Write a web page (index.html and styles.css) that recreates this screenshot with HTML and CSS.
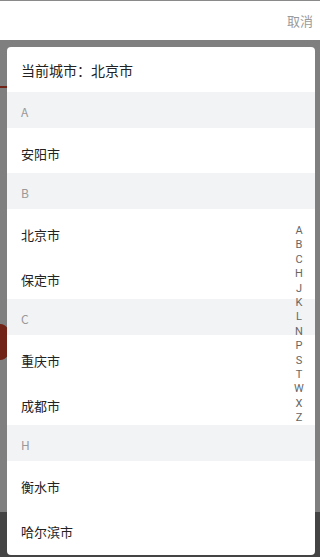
FILE: index.html
```html
<!DOCTYPE html>
<html lang="zh">
<head>
<meta charset="utf-8">
<link rel="stylesheet" href="styles.css">
</head>
<body>
<div class="page">
  <div class="topbar"><span class="cancel">取消</span></div>
  <div class="content">
    <div class="redline"></div>
    <div class="redknob"></div>
    <div class="tabbar"></div>
  </div>
</div>
<div class="overlay"></div>
<div class="modal">
  <div class="current">当前城市：北京市</div>
  <div class="list">
    <div class="group">A</div>
    <div class="city">安阳市</div>
    <div class="group">B</div>
    <div class="city">北京市</div>
    <div class="city">保定市</div>
    <div class="group">C</div>
    <div class="city">重庆市</div>
    <div class="city">成都市</div>
    <div class="group">H</div>
    <div class="city">衡水市</div>
    <div class="city">哈尔滨市</div>
  </div>
  <ul class="index">
    <li>A</li><li>B</li><li>C</li><li>H</li><li>J</li><li>K</li><li>L</li><li>N</li><li>P</li><li>S</li><li>T</li><li>W</li><li>X</li><li>Z</li>
  </ul>
</div>
</body>
</html>
```
FILE: styles.css
```css
* { box-sizing: border-box; }
html, body { margin: 0; padding: 0; }
body {
  width: 320px;
  height: 557px;
  overflow: hidden;
  font-family: "Noto Sans CJK SC", "Noto Sans", sans-serif;
  background: #fff;
  position: relative;
}
.page { display: flex; flex-direction: column; height: 557px; }
.topbar {
  height: 40px;
  border-top: 1px solid #8a8a8a;
  display: flex;
  align-items: center;
  justify-content: flex-end;
  padding-right: 7px;
  background: #fff;
}
.cancel { color: #9a9a9a; font-size: 13px; line-height: 1; }
.content { flex: 1; position: relative; background: #fff; }
.redline {
  position: absolute; left: 0; top: 46px; width: 8px; height: 2px; background: #e0462c;
}
.redknob {
  position: absolute; left: -12px; top: 284px; width: 24px; height: 36px;
  border-radius: 50%; background: #e0462c;
}
.tabbar {
  position: absolute; left: 0; right: 0; bottom: 0; height: 45px; background: #888;
}
.overlay {
  position: absolute; left: 0; right: 0; top: 40px; bottom: 0;
  background: rgba(0,0,0,0.5);
}
.modal {
  position: absolute;
  left: 7px; top: 47px; width: 308px; height: 508px;
  background: #fff;
  border-radius: 4px;
  overflow: hidden;
}
.current {
  height: 45px;
  padding-left: 14px;
  display: flex; align-items: center;
  font-size: 14px; color: #222;
}
.group {
  height: 36px;
  background: #f2f3f5;
  padding-left: 14px;
  padding-top: 2px;
  display: flex; align-items: center;
  font-size: 12px; color: #999;
}
.city {
  height: 45px;
  padding-left: 14px;
  padding-top: 6px;
  display: flex; align-items: center;
  font-size: 13px; color: #222;
}
.index {
  position: absolute;
  right: 10px; top: 177px;
  margin: 0; padding: 0; list-style: none;
  width: 12px;
  text-align: center;
  font-family: "Roboto", "Noto Sans", sans-serif;
  font-size: 11px; line-height: 14.4px; color: #666;
}
```
